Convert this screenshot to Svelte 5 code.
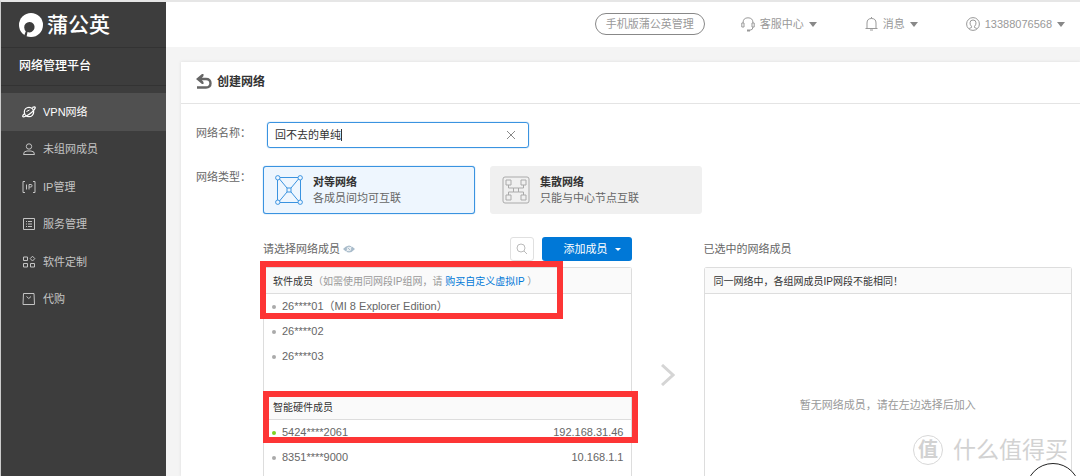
<script>
  let networkName = $state('回不去的单纯');
  let networkType = $state('peer');
  let activeMenu = $state('vpn');

  const menu = [
    { id: 'vpn', label: 'VPN网络' },
    { id: 'ungrouped', label: '未组网成员' },
    { id: 'ip', label: 'IP管理' },
    { id: 'service', label: '服务管理' },
    { id: 'custom', label: '软件定制' },
    { id: 'purchase', label: '代购' }
  ];

  const softMembers = ['26****01（MI 8 Explorer Edition）', '26****02', '26****03'];

  const hardMembers = [
    { name: '5424****2061', ip: '192.168.31.46', online: true },
    { name: '8351****9000', ip: '10.168.1.1', online: false }
  ];
</script>

<div class="app">
  <aside class="sidebar">
    <div class="logo">
      <svg width="24" height="24" viewBox="0 0 24 24">
        <circle cx="12" cy="12" r="12" fill="#fff" />
        <path d="M7.500 24 L8.500 19 A5.200 5.200 0 1 0 5.200 14.500 Q5.400 17 6.800 18.200 L5.200 22.500 Z" fill="#3d3d3d" />
      </svg>
      <span>蒲公英</span>
    </div>
    <div class="platform">网络管理平台</div>
    <nav>
      {#each menu as item (item.id)}
        <button class="menu-item" class:active={activeMenu === item.id} onclick={() => (activeMenu = item.id)}>
          <svg width="14" height="14" viewBox="0 0 14 14" fill="none" stroke="currentColor">
            {#if item.id === 'vpn'}
              <circle cx="7" cy="7" r="4.7" stroke-width="1.2" />
              <path d="M3 8.2 C-.6 11 .2 13 4.2 11 C8 9.200 12.500 5.500 13.200 3 C13.500 1.400 12 1.600 10.200 2.500" stroke-width="1.2" />
              <path d="M4.500 6.500 L7.500 5" />
            {:else if item.id === 'ungrouped'}
              <circle cx="7" cy="4.5" r="2.7" />
              <path d="M1.500 12.500 Q1.500 9 5 9 H9 Q12.500 9 12.500 12.500 Z" />
            {:else if item.id === 'ip'}
              <path d="M3 1.500 H1 V12.500 H3 M11 1.500 H13 V12.500 H11 M4.500 4.500 V9.500 M7 9.500 V4.500 H9 Q10 4.500 10 5.800 Q10 7 9 7 H7" />
            {:else if item.id === 'service'}
              <path d="M1.500 1.500 H12.500 V12.500 H1.500 Z M4 4.500 H5 M6 4.500 H10 M4 7 H5 M6 7 H10 M4 9.500 H5 M6 9.500 H10" />
            {:else if item.id === 'custom'}
              <path d="M1.500 2 H5.500 V5.500 H1.500 Z M1.500 8.500 H5.500 V12 H1.500 Z M8.500 8.500 H12.500 V12 H8.500 Z M10.500 1.200 L12.800 3.600 L10.500 6 L8.200 3.600 Z" />
            {:else}
              <path d="M1.500 1.500 H12 L12.500 12.500 H1 Z M4.500 4.500 L6.800 6.500 L9 4.500" />
            {/if}
          </svg>
          {item.label}
        </button>
      {/each}
    </nav>
  </aside>

  <div class="main">
    <header class="topbar">
      <button class="pill">手机版蒲公英管理</button>
      <button class="top-link">
        <svg width="14" height="15" viewBox="0 0 14 15" fill="none" stroke="currentColor">
          <path d="M2 6 Q2 .8 7 .8 Q12 .8 12 6 M2 6 H.8 V10 H3 V6 Z M12 6 H13.200 V10 H11 V6 Z M12 10 Q12 13 9 13.200" />
          <path d="M6 13.500 H9" stroke-width="2" />
        </svg>
        <span>客服中心</span>
        <i class="arrow"></i>
      </button>
      <button class="top-link">
        <svg width="13" height="14" viewBox="0 0 13 14" fill="none" stroke="currentColor">
          <path d="M.5 11.500 H12.500 M2 11.500 V6 Q2 1.500 6.500 1.500 Q11 1.500 11 6 V11.500 M6.500 0 V1.500 M5 13 H8" />
        </svg>
        <span>消息</span>
        <i class="arrow"></i>
      </button>
      <button class="top-link">
        <svg width="14" height="14" viewBox="0 0 14 14" fill="none" stroke="currentColor">
          <circle cx="7" cy="7" r="6.4" />
          <path d="M3.200 11.500 L5.500 10.500 V9.300 Q4 8 4 5.800 Q4 3 7 3 Q10 3 10 5.800 Q10 8 8.500 9.300 V10.500 L10.800 11.500" />
        </svg>
        <span>13388076568</span>
        <i class="arrow"></i>
      </button>
    </header>

    <section class="panel">
      <div class="panel-head">
        <button class="back" aria-label="返回">
          <svg width="16" height="16" viewBox="0 0 16 16">
            <path d="M3 5 H10 Q14.500 5 14.500 9.200 Q14.500 13.500 10 13.500 H1" fill="none" stroke="#666" stroke-width="2.400" />
            <path d="M0 5 L6 0 H7.500 V2 L5 5 L7.500 8 V10 H6 Z" fill="#666" />
          </svg>
        </button>
        <h1>创建网络</h1>
      </div>

      <div class="form">
        <div class="field">
          <label for="name">网络名称：</label>
          <div class="name-box">
            <input id="name" type="text" bind:value={networkName} />
            <i class="caret"></i>
            <button class="clear" aria-label="清空" onclick={() => (networkName = '')}>
              <svg width="10" height="10" viewBox="0 0 10 10" stroke="#888" fill="none">
                <path d="M1 1 L9 9 M9 1 L1 9" />
              </svg>
            </button>
          </div>
        </div>

        <div class="field types" role="radiogroup" aria-labelledby="type-label">
          <span class="label" id="type-label">网络类型：</span>
          <label class="card" class:selected={networkType === 'peer'}>
            <input type="radio" name="type" value="peer" bind:group={networkType} />
            <svg width="28" height="30" viewBox="0 0 28 30" fill="none" stroke="#3a93e0">
              <path d="M5 2.500 H23 M5 27.500 H23 M2.500 5 V25 M25.500 5 V25 M4.500 4 L12 13 M23.500 4 L16 13 M12 17 L4.500 26 M16 17 L23.500 26" />
              <circle cx="2.800" cy="2.800" r="2.200" />
              <circle cx="25.200" cy="2.800" r="2.200" />
              <circle cx="2.800" cy="27.200" r="2.200" />
              <circle cx="25.200" cy="27.200" r="2.200" />
              <rect x="12" y="13" width="4" height="4" />
            </svg>
            <span class="card-text"><b>对等网络</b>各成员间均可互联</span>
          </label>
          <label class="card" class:selected={networkType === 'hub'}>
            <input type="radio" name="type" value="hub" bind:group={networkType} />
            <svg width="28" height="30" viewBox="0 0 28 30" fill="none" stroke="#aaa">
              <rect x="1" y="2" width="26" height="26" rx="2" />
              <path d="M4 5 H9 V10 H4 Z M19 5 H24 V10 H19 Z M4 20 H9 V25 H4 Z M19 20 H24 V25 H19 Z M11.500 13 H16.500 V17 H11.500 Z M6.500 10 V13 H11.500 M16.500 13 H21.500 V10 M6.500 20 V17 H11.500 M16.500 17 H21.500 V20" />
            </svg>
            <span class="card-text"><b>集散网络</b>只能与中心节点互联</span>
          </label>
        </div>

        <div class="transfer">
          <div class="column">
            <div class="column-head">
              <span>请选择网络成员</span>
              <svg class="eye" width="12" height="8" viewBox="0 0 12 8">
                <path d="M0 4 Q6 -3 12 4 Q6 11 0 4 Z" fill="#a9bccb" />
                <circle cx="6" cy="4" r="1.800" fill="none" stroke="#fff" stroke-width=".8" />
                <path d="M2 7.500 L10 .5" stroke="#fff" stroke-width=".8" />
              </svg>
              <button class="search" aria-label="搜索">
                <svg width="12" height="12" viewBox="0 0 12 12" fill="none" stroke="#bbb">
                  <circle cx="5" cy="5" r="4" />
                  <path d="M8 8 L11 11" />
                </svg>
              </button>
              <button class="add">添加成员 <i class="arrow small"></i></button>
            </div>
            <div class="list">
              <div class="group">
                <h2>软件成员<span>（如需使用同网段IP组网，请 <a href="#buy">购买自定义虚拟IP</a> ）</span></h2>
                <ul>
                  {#each softMembers as member}
                    <li><i class="dot"></i>{member}</li>
                  {/each}
                </ul>
                <div class="mark soft"></div>
              </div>
              <div class="group hardware">
                <h2>智能硬件成员</h2>
                <ul>
                  {#each hardMembers as member}
                    <li><i class="dot" class:online={member.online}></i>{member.name}<span class="ip">{member.ip}</span></li>
                  {/each}
                </ul>
                <div class="mark hard"></div>
              </div>
            </div>
          </div>

          <svg class="chevron" width="14" height="22" viewBox="0 0 14 22" fill="none" stroke="#d5d5d5" stroke-width="3">
            <path d="M1 1 L12 11 L1 21" />
          </svg>

          <div class="column">
            <div class="column-head">已选中的网络成员</div>
            <div class="list">
              <h2>同一网络中，各组网成员IP网段不能相同！</h2>
              <p class="empty">暂无网络成员，请在左边选择后加入</p>
            </div>
          </div>
        </div>
      </div>
    </section>
  </div>

  <div class="watermark"><span class="seal">值</span>什么值得买</div>
  <div class="bubble"></div>
</div>

<style>
  :global(body) {
    background: #f4f4f4;
  }
  .app {
    position: relative;
    display: flex;
    height: 100vh;
    box-sizing: border-box;
    border-top: 2px solid #e6e6e6;
    border-left: 1px solid #ccc;
    overflow: hidden;
    font-family: 'Liberation Sans', 'Noto Sans CJK SC', sans-serif;
    font-size: 11px;
    line-height: 16px;
    color: #666;
  }
  button {
    padding: 0;
    border: 0;
    background: none;
    font: inherit;
    color: inherit;
    cursor: pointer;
  }
  svg {
    flex: none;
    display: block;
  }

  .sidebar {
    flex: none;
    width: 165px;
    background: #3d3d3d;
    color: #fff;
  }
  .logo {
    display: flex;
    align-items: center;
    gap: 4px;
    padding: 9px 18px 8px;
    border-bottom: 1px solid #333;
    font-size: 21px;
    font-weight: 500;
  }
  .logo span {
    line-height: 28px;
  }
  .platform {
    padding: 10px 18px 11px;
    border-bottom: 1px solid #333;
    font-size: 12px;
    font-weight: 500;
  }
  nav {
    display: grid;
    grid-auto-rows: 1fr;
    height: 225px;
    margin-top: 7px;
  }
  .menu-item {
    display: flex;
    align-items: center;
    gap: 7px;
    padding-left: 21px;
    color: #c4c4c4;
  }
  .menu-item.active {
    background: #505050;
    color: #fff;
  }

  .main {
    flex: 1;
    min-width: 0;
    display: flex;
    flex-direction: column;
  }
  .topbar {
    display: flex;
    align-items: center;
    justify-content: flex-end;
    padding: 11px 15px 12px;
    background: #fff;
    color: #999;
  }
  .pill {
    padding: 2px 10px;
    margin-right: 36px;
    border: 1px solid #888;
    border-radius: 12px;
  }
  .top-link {
    display: flex;
    align-items: center;
    gap: 5px;
    margin-right: 48px;
  }
  .top-link:last-child {
    margin-right: 0;
  }
  .arrow {
    border: 4px solid transparent;
    border-top: 5px solid #888;
    border-bottom: 0;
  }
  .arrow.small {
    border-width: 3px;
    border-top-color: #fff;
    border-bottom: 0;
  }

  .panel {
    flex: 1;
    display: flex;
    flex-direction: column;
    margin: 15px 0 0 15px;
    background: #fff;
    box-shadow: 0 0 3px #ddd;
  }
  .panel-head {
    display: flex;
    align-items: center;
    gap: 5px;
    padding: 12px 15px 13px;
    border-bottom: 1px solid #e4e4e4;
  }
  h1 {
    margin: 0;
    font-size: 12px;
    font-weight: 700;
    color: #333;
  }
  .form {
    flex: 1;
    display: flex;
    flex-direction: column;
    padding: 18px 8px 0 15px;
  }
  .field {
    display: flex;
  }
  .field > label:first-child,
  .label {
    flex: none;
    width: 67px;
    padding-top: 3px;
  }
  .name-box {
    display: flex;
    align-items: center;
    width: 241px;
    margin-left: 4px;
    padding: 4px 12px 4px 7px;
    border: 1px solid #3a93e0;
    border-radius: 3px;
    box-shadow: 0 0 1px #3a93e0;
  }
  .name-box input {
    field-sizing: content;
    padding: 0;
    border: 0;
    outline: 0;
    font: inherit;
    color: #333;
  }
  .caret {
    width: 1px;
    height: 12px;
    background: #333;
  }
  .clear {
    margin-left: auto;
  }
  .types {
    margin-top: 18px;
  }
  .card {
    position: relative;
    display: flex;
    align-items: center;
    gap: 10px;
    box-sizing: border-box;
    width: 212px;
    margin-right: 15px;
    padding: 7px 11px;
    border: 1px solid #f0f0f0;
    border-radius: 3px;
    background: #f0f0f0;
  }
  .card.selected {
    border-color: #3a93e0;
    background: #eef6fe;
    box-shadow: 0 0 1px #3a93e0;
  }
  .card input {
    position: absolute;
    opacity: 0;
  }
  .card-text b {
    display: block;
    color: #333;
  }

  .transfer {
    flex: 1;
    display: grid;
    grid-template-columns: 1fr 72px 1fr;
    margin: 22px 0 0 67px;
  }
  .column {
    display: flex;
    flex-direction: column;
  }
  .column-head {
    display: flex;
    align-items: center;
    height: 26px;
    margin-bottom: 5px;
  }
  .eye {
    margin-left: 3px;
  }
  .search {
    display: grid;
    place-items: center;
    width: 24px;
    height: 24px;
    margin-left: auto;
    border: 1px solid #e0e0e0;
    border-radius: 3px;
  }
  .add {
    display: flex;
    align-items: center;
    gap: 7px;
    margin-left: 8px;
    padding: 4px 11px 4px 22px;
    border-radius: 3px;
    background: #0078d7;
    color: #fff;
  }
  .list {
    flex: 1;
    border: 1px solid #ddd;
    border-bottom: 0;
    border-radius: 3px 3px 0 0;
  }
  .group {
    position: relative;
  }
  .hardware {
    margin-top: 25px;
  }
  h2 {
    margin: 0;
    padding: 6px 9px 3px;
    border-bottom: 1px solid #ddd;
    background: #fafafa;
    font-size: 10px;
    font-weight: 400;
    color: #333;
  }
  h2 span {
    color: #999;
  }
  a {
    color: #0078d7;
    text-decoration: none;
  }
  ul {
    margin: 0;
    padding: 0;
    list-style: none;
  }
  li {
    display: flex;
    align-items: center;
    padding: 0 7px 0 8px;
    line-height: 25px;
  }
  .dot {
    width: 4px;
    height: 4px;
    margin-right: 6px;
    border-radius: 50%;
    background: #aaa;
  }
  .dot.online {
    background: #7ed321;
  }
  .ip {
    margin-left: auto;
  }
  .chevron {
    margin: 128px auto 0;
  }
  .empty {
    margin: 103px 0 0;
    text-align: center;
    color: #999;
  }

  /* red frames laid over the member groups */
  .mark {
    position: absolute;
    border: 6px solid #fd3535;
  }
  .mark.soft {
    top: -7px;
    left: -4px;
    width: 291px;
    height: 46px;
  }
  .mark.hard {
    top: -3px;
    left: -1px;
    right: -7px;
    height: 40px;
  }

  .watermark {
    position: absolute;
    right: 12px;
    bottom: 10px;
    display: flex;
    align-items: center;
    gap: 10px;
    font-size: 23px;
    line-height: 32px;
    color: #d2d2d2;
  }
  .seal {
    width: 28px;
    height: 28px;
    border: 1px solid #d8d8d8;
    border-radius: 50%;
    font-size: 20px;
    font-weight: 700;
    line-height: 28px;
    text-align: center;
  }
  .bubble {
    position: absolute;
    right: 0;
    bottom: -41px;
    width: 52px;
    height: 52px;
    border: 1px solid #222;
    border-radius: 50%;
    background: #fff;
  }
</style>
